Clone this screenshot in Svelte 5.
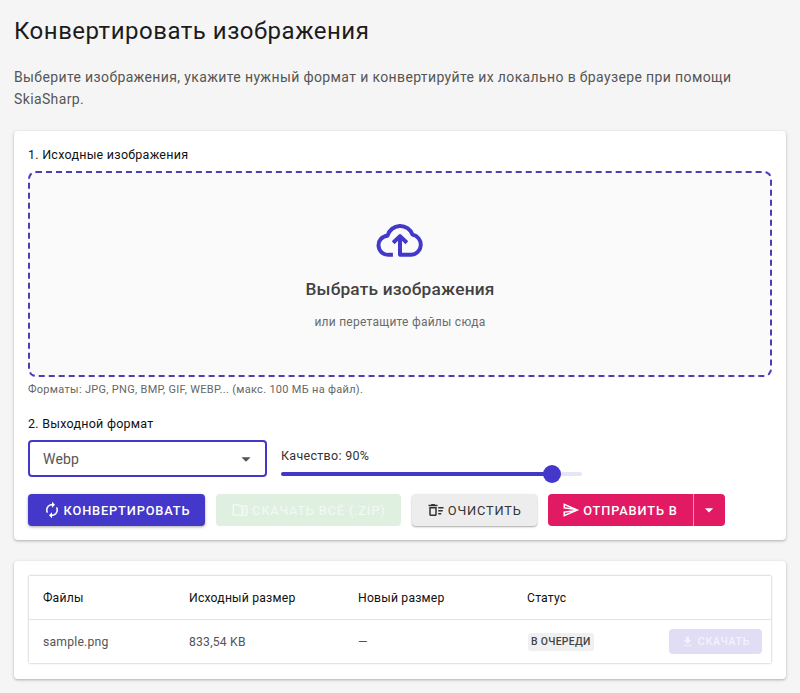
<script>
  let quality = $state(90);
  const files = [{ name: 'sample.png', size: '833,54 KB', next: '—', status: 'В очереди' }];
</script>

<main class="page">
  <h1>Конвертировать изображения</h1>
  <p class="intro">Выберите изображения, укажите нужный формат и конвертируйте их локально в браузере при помощи SkiaSharp.</p>

  <section class="paper settings">
    <div class="step">1. Исходные изображения</div>
    <div class="dropzone">
      <svg class="cloud" viewBox="0 0 24 24" aria-hidden="true">
        <path d="M8.600 19.600h-2A4.600 4.600 0 0 1 6 10.400a6.300 6.300 0 0 1 12-.5 4.900 4.900 0 0 1-.6 9.700H12V11.400" />
        <path d="M8.700 13.800 12 10.600l3.300 3.200" />
      </svg>
      <div class="pick">Выбрать изображения</div>
      <div class="drag">или перетащите файлы сюда</div>
    </div>
    <div class="hint">Форматы: JPG, PNG, BMP, GIF, WEBP... (макс. 100 МБ на файл).</div>

    <div class="step second">2. Выходной формат</div>
    <div class="format-row">
      <div class="select">
        <span>Webp</span>
        <svg viewBox="0 0 24 24" aria-hidden="true"><path d="M7 10l5 5 5-5z" /></svg>
      </div>
      <div class="quality">
        <div class="quality-label">Качество: {quality}%</div>
        <div class="slider">
          <div class="fill" style="width: {quality}%"></div>
          <div class="thumb" style="left: {quality}%"></div>
        </div>
      </div>
    </div>

    <div class="actions">
      <button class="btn primary">
        <svg viewBox="0 0 24 24" aria-hidden="true"><path d="M12 6v3l4-4-4-4v3c-4.420 0-8 3.580-8 8 0 1.570.46 3.030 1.240 4.260L6.700 14.800c-.45-.83-.7-1.790-.7-2.800 0-3.310 2.690-6 6-6zm6.760 1.740L17.300 9.200c.44.84.7 1.790.7 2.800 0 3.310-2.690 6-6 6v-3l-4 4 4 4v-3c4.420 0 8-3.580 8-8 0-1.570-.46-3.030-1.240-4.260z" /></svg>
        Конвертировать
      </button>
      <button class="btn zip" disabled>
        <svg viewBox="0 0 24 24" aria-hidden="true"><path d="M20 6h-8l-2-2H4c-1.100 0-2 .9-2 2v12c0 1.100.9 2 2 2h16c1.100 0 2-.9 2-2V8c0-1.100-.9-2-2-2zM4 18V6h5.200l2 2H14v10zm12 0v-2h2v-2h-2v-2h2v-2h-2V8h4v10z" /></svg>
        Скачать всё (.zip)
      </button>
      <button class="btn clear">
        <svg viewBox="0 0 24 24" aria-hidden="true"><path d="M15 16h4v2h-4zm0-8h7v2h-7zm0 4h6v2h-6zM3 18c0 1.100.9 2 2 2h6c1.100 0 2-.9 2-2V8H3zm2-8h6v8H5zm5-6H6L5 5H2v2h12V5h-3z" /></svg>
        Очистить
      </button>
      <div class="split">
        <button class="btn send">
          <svg viewBox="0 0 24 24" aria-hidden="true"><path d="M4.010 6.030l7.510 3.220-7.520-1 .01-2.220m7.500 8.720L4 17.970v-2.220l7.510-1M2.010 3 2 10l15 2-15 2 .01 7L23 12 2.010 3z" /></svg>
          Отправить в
        </button>
        <button class="btn send caret" aria-label="Ещё">
          <svg viewBox="0 0 24 24" aria-hidden="true"><path d="M7 10l5 5 5-5z" /></svg>
        </button>
      </div>
    </div>
  </section>

  <section class="paper results">
    <table>
      <thead>
        <tr>
          <th class="col-name">Файлы</th>
          <th class="col-size">Исходный размер</th>
          <th class="col-new">Новый размер</th>
          <th>Статус</th>
          <th></th>
        </tr>
      </thead>
      <tbody>
        {#each files as file}
          <tr>
            <td>{file.name}</td>
            <td>{file.size}</td>
            <td>{file.next}</td>
            <td><span class="chip">{file.status}</span></td>
            <td class="cell-action">
              <button class="btn download" disabled>
                <svg viewBox="0 0 24 24" aria-hidden="true"><path d="M19 9h-4V3H9v6H5l7 7 7-7zM5 18v2h14v-2H5z" /></svg>
                Скачать
              </button>
            </td>
          </tr>
        {/each}
      </tbody>
    </table>
  </section>
</main>

<style>
  :global(body) {
    margin: 0;
    background: #f5f5f5;
    font-family: Roboto, 'Liberation Sans', sans-serif;
    color: rgba(0, 0, 0, 0.87);
  }

  .page {
    padding: 14px 14px 0;
    height: 679px;
    overflow: hidden;
  }

  h1 {
    margin: 0;
    font-size: 24px;
    font-weight: 400;
    line-height: 34px;
    letter-spacing: 0.5px;
    color: #1c1c1c;
  }

  .intro {
    margin: 18px 0 0;
    font-size: 14px;
    line-height: 22px;
    letter-spacing: 0.37px;
    color: #555;
  }

  .paper {
    background: #fff;
    border-radius: 4px;
    box-shadow: 0 1px 3px rgba(0, 0, 0, 0.3);
  }

  .settings {
    margin-top: 21px;
    padding: 15px 14px 14px;
    height: 409px;
    box-sizing: border-box;
  }

  .step {
    font-size: 12.500px;
    line-height: 18px;
    font-weight: 400;
    letter-spacing: 0.25px;
    color: #111;
  }

  .dropzone {
    margin-top: 7px;
    height: 206px;
    box-sizing: border-box;
    border: 2px dashed #4a3fb5;
    border-radius: 8px;
    background: #fafafa;
    display: flex;
    flex-direction: column;
    align-items: center;
  }

  .cloud {
    width: 50px;
    height: 50px;
    margin-top: 41px;
    fill: none;
    stroke: #4338ca;
    stroke-width: 1.900;
    stroke-linejoin: round;
  }

  .pick {
    margin-top: 13px;
    font-size: 17.300px;
    line-height: 24px;
    font-weight: 500;
    letter-spacing: 0.2px;
    color: #424242;
  }

  .drag {
    margin-top: 12px;
    font-size: 12px;
    line-height: 18px;
    letter-spacing: 0.25px;
    color: #6b6b6b;
  }

  .hint {
    margin-top: 5px;
    font-size: 11px;
    line-height: 16px;
    letter-spacing: 0.3px;
    color: #666;
  }

  .second {
    margin-top: 17px;
  }

  .format-row {
    margin-top: 7px;
    display: flex;
    gap: 14px;
    height: 37px;
  }

  .select {
    width: 239px;
    box-sizing: border-box;
    border: 2px solid #4338ca;
    border-radius: 4px;
    display: flex;
    align-items: center;
    justify-content: space-between;
    padding: 0 8px 0 13px;
    font-size: 14px;
    letter-spacing: 0.2px;
    color: #555;
  }

  .select svg {
    width: 22px;
    height: 22px;
    fill: #555;
  }

  .quality {
    width: 301px;
  }

  .quality-label {
    margin-top: 7px;
    font-size: 12.500px;
    line-height: 18px;
    letter-spacing: 0.3px;
    color: #333;
  }

  .slider {
    position: relative;
    margin-top: 7px;
    height: 4px;
    border-radius: 2px;
    background: #e6e4f7;
  }

  .fill {
    height: 100%;
    border-radius: 2px;
    background: #4338ca;
  }

  .thumb {
    position: absolute;
    top: 50%;
    width: 18px;
    height: 18px;
    border-radius: 50%;
    background: #4338ca;
    transform: translate(-50%, -50%);
  }

  .actions {
    margin-top: 17px;
    display: flex;
    gap: 10.500px;
  }

  .btn {
    display: inline-flex;
    align-items: center;
    justify-content: center;
    gap: 3px;
    height: 32px;
    padding: 0;
    border: none;
    border-radius: 4px;
    font-family: inherit;
    font-size: 12.800px;
    font-weight: 400;
    letter-spacing: 0.85px;
    text-transform: uppercase;
    white-space: nowrap;
  }

  .btn svg {
    width: 18px;
    height: 18px;
    fill: currentColor;
    flex: none;
  }

  .primary {
    width: 177px;
    background: #4338ca;
    color: #fff;
    box-shadow: 0 1px 3px rgba(0, 0, 0, 0.35);
    font-weight: 500;
  }

  .zip {
    width: 185.500px;
    background: #dff0e1;
    color: #f2f9f3;
  }

  .clear {
    width: 125.500px;
    background: #ededed;
    color: #333;
    box-shadow: 0 1px 2px rgba(0, 0, 0, 0.35);
  }

  .split {
    display: flex;
  }

  .send {
    width: 145px;
    background: #e21a63;
    color: #fff;
    border-radius: 4px 0 0 4px;
    font-weight: 500;
  }

  .caret {
    width: 32.500px;
    border-left: 1px solid rgba(255, 255, 255, 0.55);
    border-radius: 0 4px 4px 0;
  }

  .caret svg {
    width: 20px;
    height: 20px;
  }

  .results {
    margin-top: 21px;
    padding: 15px;
    padding-bottom: 16px;
  }

  table {
    width: 100%;
    border-collapse: collapse;
    box-shadow: 0 0 2px rgba(0, 0, 0, 0.35);
    font-size: 12.200px;
    letter-spacing: 0.2px;
  }

  th {
    height: 43px;
    padding: 0 0 0 14px;
    text-align: left;
    font-weight: 400;
    color: #111;
    border-bottom: 1px solid #e2e2e2;
  }

  td {
    height: 43px;
    padding: 0 0 0 14px;
    color: #555;
  }

  .col-name {
    width: 132px;
  }

  .col-size {
    width: 155px;
  }

  .col-new {
    width: 155px;
  }

  .chip {
    display: inline-block;
    padding: 0 3px;
    margin-left: 1px;
    border-radius: 3px;
    background: #f0f0f0;
    font-size: 10.400px;
    font-weight: 500;
    line-height: 18px;
    letter-spacing: 0.3px;
    text-transform: uppercase;
    color: #444;
  }

  .cell-action {
    padding-right: 9px;
    text-align: right;
  }

  .download {
    width: 93px;
    height: 25px;
    font-size: 10.500px;
    font-weight: 500;
    letter-spacing: 0.75px;
    background: #e0ddf5;
    color: #f4f3fc;
    vertical-align: middle;
    gap: 4px;
  }

  .download svg {
    width: 13px;
    height: 13px;
  }
</style>
